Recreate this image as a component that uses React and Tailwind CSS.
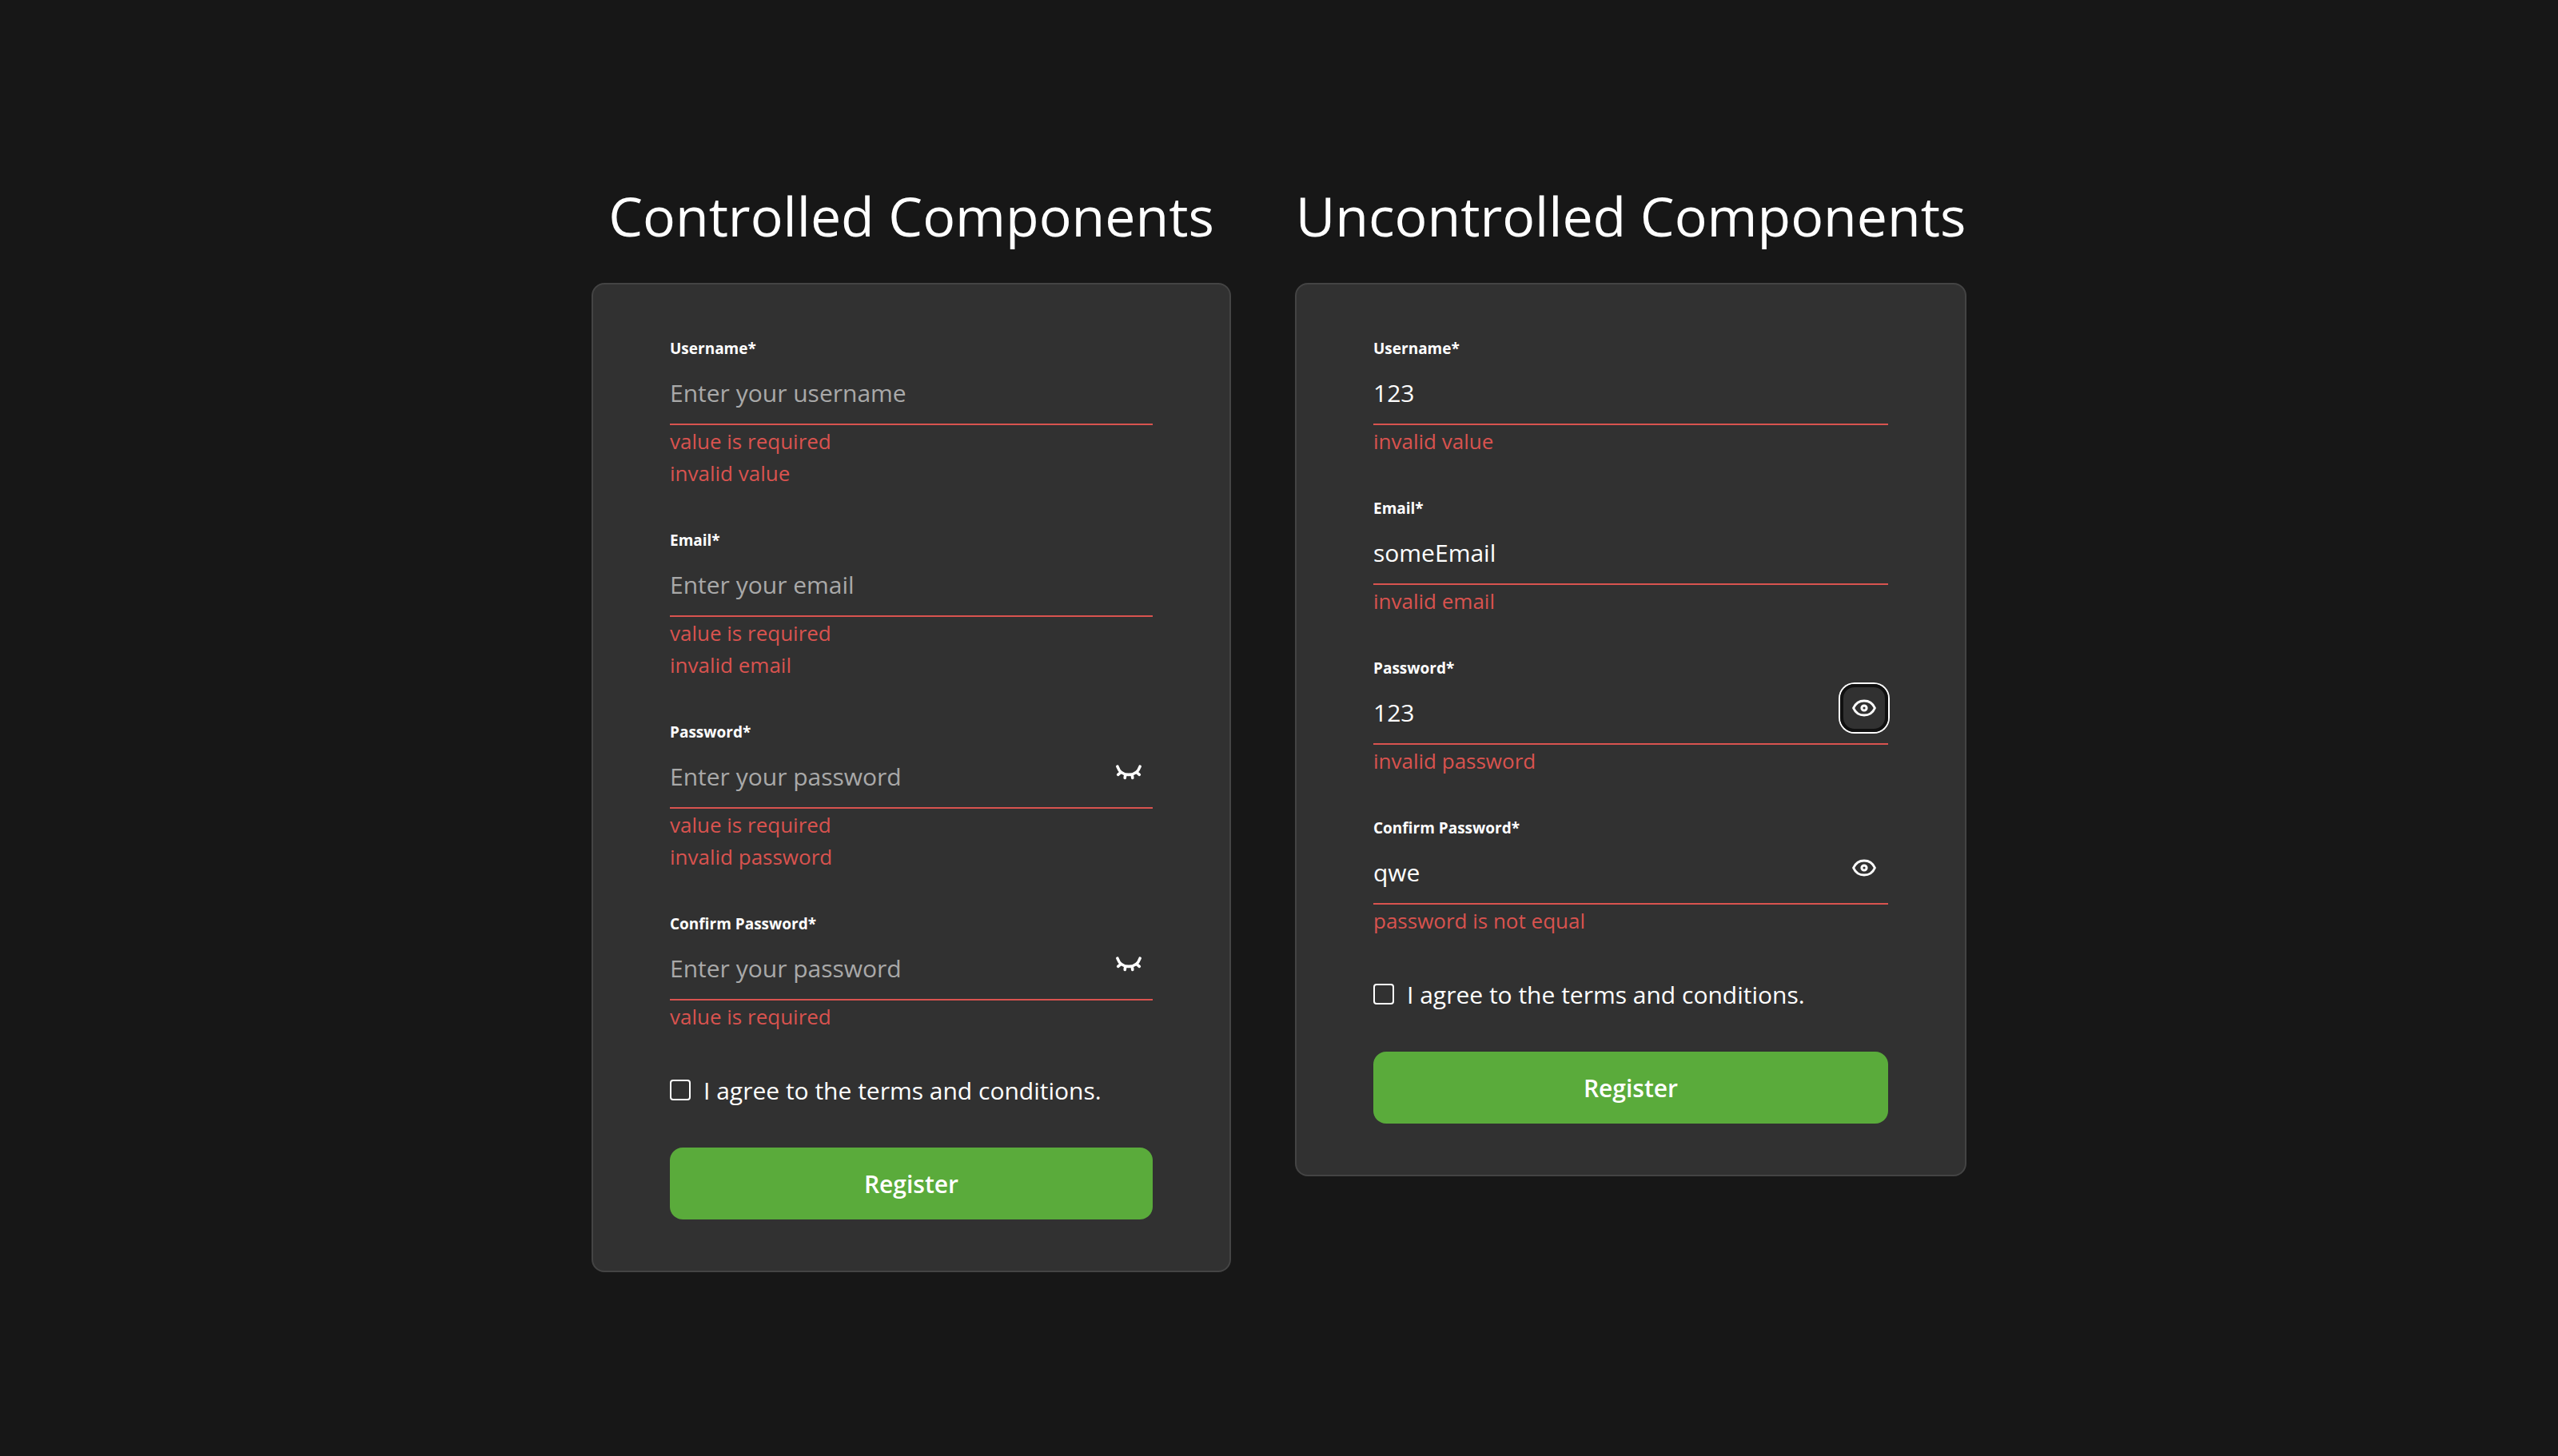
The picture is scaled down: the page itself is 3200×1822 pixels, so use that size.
import { useId, useState } from "react";

function EyeIcon() {
  return (
    <svg width="32" height="24" viewBox="0 0 32 24" fill="none" stroke="currentColor" strokeWidth="3" strokeLinejoin="round" aria-hidden="true">
      <path d="M2.6 12C5 6.6 9.8 2.9 16 2.9S27 6.6 29.4 12C27 17.4 22.2 21.1 16 21.1S5 17.4 2.6 12Z" />
      <circle cx="16" cy="12" r="3.1" />
    </svg>
  );
}

function EyeClosedIcon() {
  return (
    <svg width="32" height="20" viewBox="0 0 32 20" fill="none" stroke="currentColor" strokeWidth="3.6" strokeLinecap="round" aria-hidden="true">
      <path d="M1.9 3.2C4 9.6 9.4 13.4 16 13.4S28 9.6 30.1 3.2" />
      <path d="M6 10.6L2.7 13.4M11.8 13.6L11.2 17.4M20.2 13.6L20.8 17.4M26 10.6L29.3 13.4" />
    </svg>
  );
}

function Field({ label, placeholder, value = "", secret = false, visible = false, focused = false, errors }) {
  const id = useId();
  const [text, setText] = useState(value);
  const [shown, setShown] = useState(visible);
  return (
    <div className="flex flex-col">
      <label htmlFor={id} className="self-start text-[19px] leading-8 font-bold">
        {label}
      </label>
      <div className="flex items-start border-b-2 border-[#d9534f]">
        <input
          id={id}
          type={secret && !shown ? "password" : "text"}
          value={text}
          onChange={(e) => setText(e.target.value)}
          placeholder={placeholder}
          className="h-[78px] min-w-0 flex-1 bg-transparent text-[30px] outline-none placeholder:text-[#a9a9a9]"
        />
        {secret && (
          <button
            type="button"
            aria-label={shown ? "Hide password" : "Show password"}
            onClick={() => setShown(!shown)}
            className={
              focused
                ? "mt-1 flex size-15 shrink-0 items-center justify-center rounded-[18px] border-4 border-[#101010] ring-2 ring-white"
                : "mt-1 flex size-15 shrink-0 items-center justify-center rounded-[18px]"
            }
          >
            {shown ? <EyeIcon /> : <EyeClosedIcon />}
          </button>
        )}
      </div>
      <ul className="text-[26px] leading-10 text-[#d9534f]">
        {errors.map((error) => (
          <li key={error}>{error}</li>
        ))}
      </ul>
    </div>
  );
}

function RegisterForm({ title, fields, className }) {
  return (
    <section className={className}>
      <h1 className="mb-11 text-center text-[68px] leading-20 whitespace-nowrap">{title}</h1>
      <form
        noValidate
        onSubmit={(e) => e.preventDefault()}
        className="flex flex-col gap-12 rounded-2xl border-2 border-[#444444] bg-[#313131] px-24 py-16"
      >
        {fields.map((field) => (
          <Field key={field.label} {...field} />
        ))}
        <label className="flex h-12 items-center gap-4 text-[30px]">
          <input type="checkbox" className="size-[26px] shrink-0 appearance-none rounded-sm border-2 border-white checked:bg-[#5aab3b]" />
          I agree to the terms and conditions.
        </label>
        <button type="submit" className="h-[90px] rounded-2xl bg-[#5aab3b] text-[30px] font-semibold">
          Register
        </button>
      </form>
    </section>
  );
}

const controlledFields = [
  { label: "Username*", placeholder: "Enter your username", errors: ["value is required", "invalid value"] },
  { label: "Email*", placeholder: "Enter your email", errors: ["value is required", "invalid email"] },
  { label: "Password*", placeholder: "Enter your password", secret: true, errors: ["value is required", "invalid password"] },
  { label: "Confirm Password*", placeholder: "Enter your password", secret: true, errors: ["value is required"] },
];

const uncontrolledFields = [
  { label: "Username*", placeholder: "Enter your username", value: "123", errors: ["invalid value"] },
  { label: "Email*", placeholder: "Enter your email", value: "someEmail", errors: ["invalid email"] },
  { label: "Password*", placeholder: "Enter your password", value: "123", secret: true, visible: true, focused: true, errors: ["invalid password"] },
  { label: "Confirm Password*", placeholder: "Enter your password", value: "qwe", secret: true, visible: true, errors: ["password is not equal"] },
];

export default function App() {
  return (
    <main className="flex min-h-screen items-center justify-center bg-[#171717] font-['Open_Sans',sans-serif] text-white">
      <div className="flex flex-1 items-start justify-center gap-20">
        <RegisterForm title="Controlled Components" fields={controlledFields} className="max-w-[800px] flex-1" />
        <RegisterForm title="Uncontrolled Components" fields={uncontrolledFields} className="max-w-[840px] flex-1" />
      </div>
    </main>
  );
}
